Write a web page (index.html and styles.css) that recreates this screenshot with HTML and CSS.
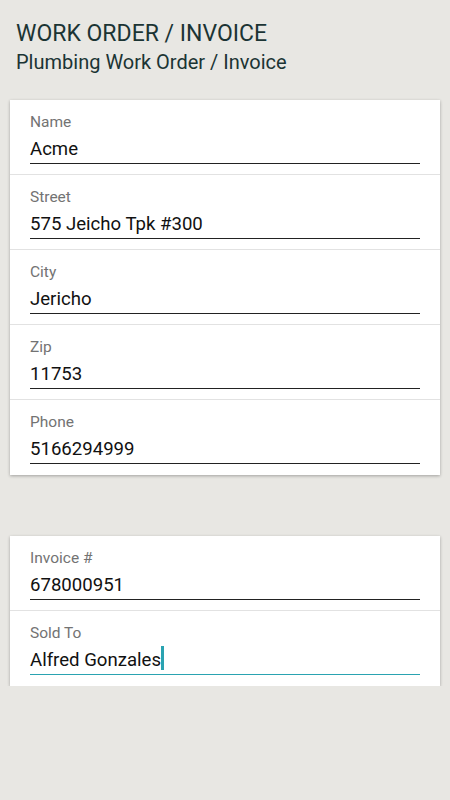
FILE: index.html
```html
<!DOCTYPE html>
<html>
  <head>
    <title>Work Order / Invoice</title>
    <link rel="stylesheet" href="styles.css">
  </head>
  <body>
    <div class="kop">
      <div class="titel">WORK ORDER / INVOICE</div>
      <div class="subtitel">Plumbing Work Order / Invoice</div>
    </div>

    <div class="kaart">
      <div class="veld">
        <div class="label">Name</div>
        <div class="waarde">Acme</div>
      </div>
      <div class="veld">
        <div class="label">Street</div>
        <div class="waarde">575 Jeicho Tpk #300</div>
      </div>
      <div class="veld">
        <div class="label">City</div>
        <div class="waarde">Jericho</div>
      </div>
      <div class="veld">
        <div class="label">Zip</div>
        <div class="waarde">11753</div>
      </div>
      <div class="veld">
        <div class="label">Phone</div>
        <div class="waarde">5166294999</div>
      </div>
    </div>

    <div class="kaart kaart-tweede">
      <div class="veld">
        <div class="label">Invoice #</div>
        <div class="waarde">678000951</div>
      </div>
      <div class="veld">
        <div class="label">Sold To</div>
        <div class="waarde waarde-actief">Alfred Gonzales<span class="cursor"></span></div>
      </div>
    </div>
  </body>
</html>
```

FILE: styles.css
```css
body {
  margin: 0;
  background-color: #e8e7e3;
  font-family: Roboto, "Noto Sans", sans-serif;
}
.kop {
  padding: 20px 16px 0 16px;
  color: #1b3434;
}
.titel {
  font-size: 23px;
  line-height: 28px;
}
.subtitel {
  font-size: 20px;
  line-height: 24px;
  margin-top: 2px;
}
.kaart {
  margin: 26px 10px 0 10px;
  background-color: white;
  box-shadow: 0 1px 3px rgba(0, 0, 0, 0.3);
}
.kaart-tweede {
  margin-top: 61px;
}
.veld {
  height: 75px;
  box-sizing: border-box;
  padding: 12px 20px 0 20px;
  border-bottom: 1px solid #e2e2e2;
}
.veld:last-child {
  border-bottom: none;
}
.label {
  font-size: 15.5px;
  line-height: 20px;
  color: #737373;
}
.waarde {
  margin-top: 5px;
  font-size: 18.6px;
  line-height: 24px;
  padding-bottom: 2px;
  color: #111;
  border-bottom: 1px solid #222;
}
.waarde-actief {
  border-bottom-color: #2aa3b1;
}
.cursor {
  display: inline-block;
  width: 3px;
  height: 24px;
  margin-top: -4px;
  vertical-align: -4px;
  background-color: #2aa3b1;
}
```
